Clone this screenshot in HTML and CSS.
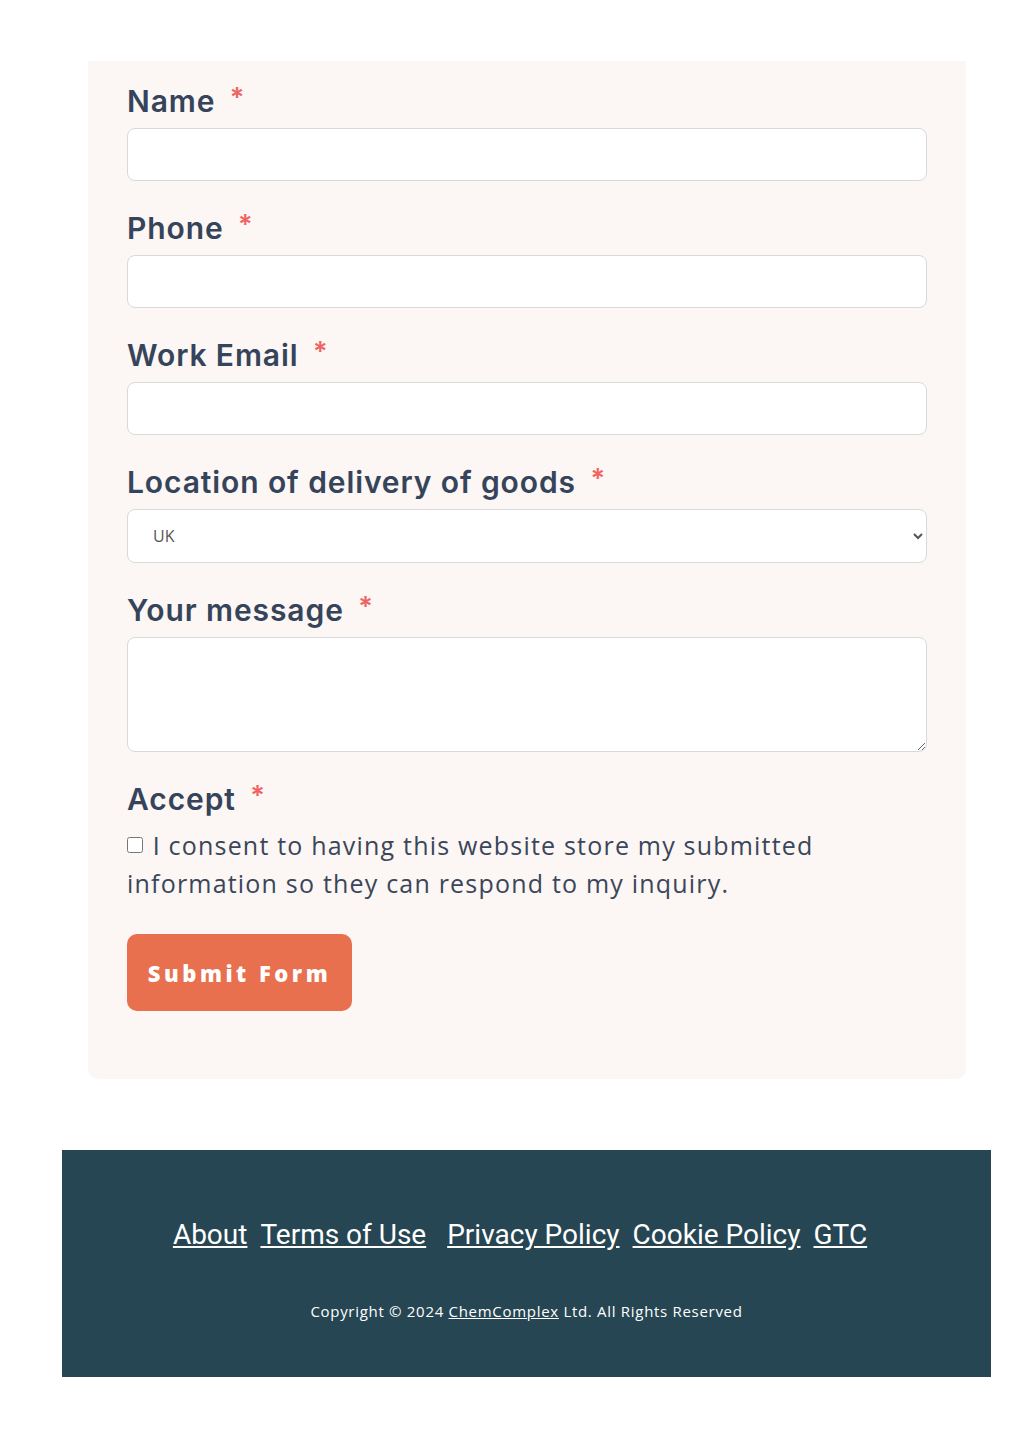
FILE: index.html
```html
<!DOCTYPE html>
<html lang="en">
<head>
    <meta charset="UTF-8">
    <meta name="viewport" content="width=device-width, initial-scale=1.0">
    <title>Contact</title>
    <link rel="stylesheet" href="styles.css">
</head>
<body>
    <div class="form-card">
        <form id="contactForm">
            <div class="field">
                <label for="name">Name <span class="req">*</span></label>
                <input type="text" id="name" name="name">
            </div>
            <div class="field">
                <label for="phone">Phone <span class="req">*</span></label>
                <input type="text" id="phone" name="phone">
            </div>
            <div class="field">
                <label for="email">Work Email <span class="req">*</span></label>
                <input type="text" id="email" name="email">
            </div>
            <div class="field">
                <label for="location">Location of delivery of goods <span class="req">*</span></label>
                <select id="location" name="location">
                    <option>UK</option>
                </select>
            </div>
            <div class="field">
                <label for="message">Your message <span class="req">*</span></label>
                <textarea id="message" name="message"></textarea>
            </div>
            <div class="field">
                <label>Accept <span class="req">*</span></label>
                <p class="consent"><input type="checkbox" id="consent"> I consent to having this website store my submitted information so they can respond to my inquiry.</p>
            </div>
            <button type="button" class="submit">Submit Form</button>
        </form>
    </div>

    <footer class="footer">
        <nav class="footer-links">
            <a href="#">About</a>
            <a href="#">Terms of Use</a>
            <a href="#" class="spaced">Privacy Policy</a>
            <a href="#">Cookie Policy</a>
            <a href="#">GTC</a>
        </nav>
        <p class="copyright">Copyright © 2024 <a href="#">ChemComplex</a> Ltd. All Rights Reserved</p>
    </footer>
</body>
</html>
```

FILE: styles.css
```css
body {
    font-family: "Open Sans", sans-serif;
    margin: 0;
    padding: 61px 0 74px;
    background-color: #fff;
    color: #3a4659;
}
.form-card {
    width: 878px;
    margin: 0 0 0 88px;
    padding: 21px 39px 68px;
    box-sizing: border-box;
    background-color: #fcf6f4;
    border-radius: 0 0 10px 10px;
}
.field {
    margin-bottom: 28px;
}
label {
    display: block;
    font-family: "Inter", sans-serif;
    font-size: 30px;
    font-weight: 600;
    letter-spacing: 0.9px;
    line-height: 38px;
    margin-bottom: 8px;
    color: #35445a;
}
.req {
    color: #ef6461;
    font-size: 27px;
    vertical-align: top;
    line-height: 32px;
    margin-left: 6px;
}
input[type="text"],
select,
textarea {
    display: block;
    width: 100%;
    height: 53px;
    padding: 8px 21px;
    border: 1px solid #d9d9dc;
    border-radius: 8px;
    background-color: #fff;
    box-sizing: border-box;
    font-family: "Open Sans", sans-serif;
    font-size: 16px;
    color: #555;
}
select {
    height: 54px;
}
textarea {
    height: 115px;
    resize: vertical;
}
.consent {
    margin: 3px 0 0;
    font-size: 25px;
    line-height: 38px;
    color: #3a4659;
    letter-spacing: 1.2px;
}
.consent input {
    width: 16px;
    height: 16px;
    margin: 0 2px 0 0;
    vertical-align: 2px;
}
.submit {
    margin-top: 4px;
    width: 225px;
    height: 77px;
    background-color: #e8704f;
    color: #fff;
    border: none;
    border-radius: 10px;
    font-family: "Open Sans", sans-serif;
    font-size: 22px;
    font-weight: 800;
    letter-spacing: 3.5px;
    cursor: pointer;
}
.footer {
    width: 929px;
    margin: 71px 0 0 62px;
    padding: 68px 0 56px;
    background-color: #264653;
    color: #fff;
    text-align: center;
}
.footer-links {
    display: flex;
    justify-content: center;
    gap: 13px;
    padding-right: 13px;
    font-family: "Roboto", sans-serif;
    font-size: 28px;
}
.footer-links a {
    color: #fff;
}
.footer-links .spaced {
    margin-left: 8px;
}
.copyright {
    margin: 50px 0 0;
    font-size: 15px;
    letter-spacing: 0.7px;
}
.copyright a {
    color: #fff;
}
```
